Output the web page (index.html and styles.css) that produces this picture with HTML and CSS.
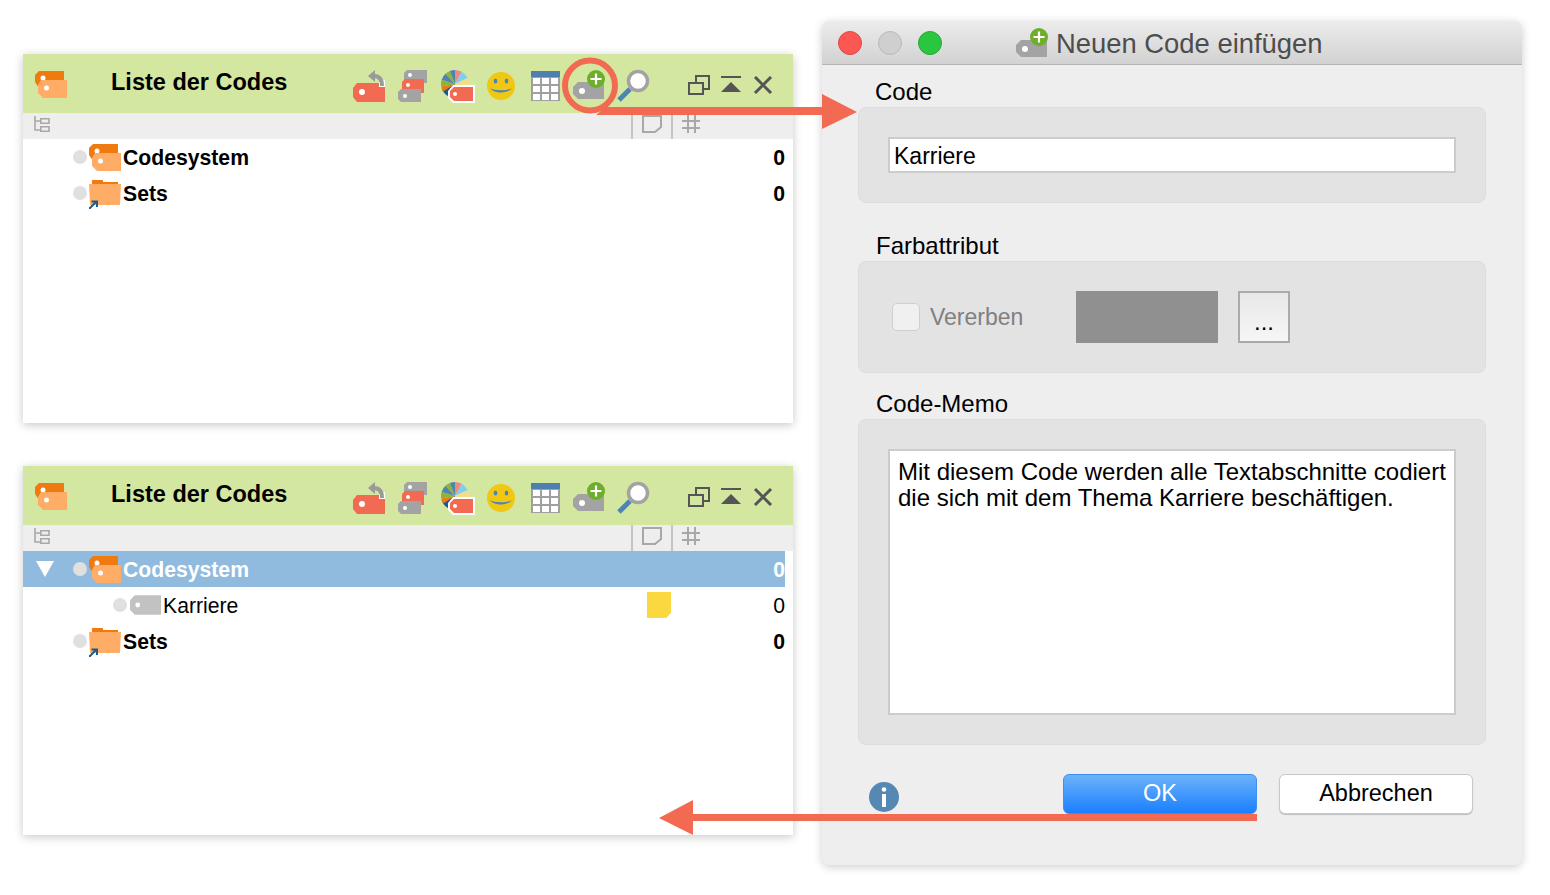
FILE: index.html
```html
<!DOCTYPE html>
<html lang="de">
<head>
    <meta charset="UTF-8">
    <meta name="viewport" content="width=device-width, initial-scale=1.0">
    <title>Neuen Code einfügen</title>
    <link rel="stylesheet" href="styles.css">
</head>
<body>
    <!-- icon sprite -->
    <svg class="sprite" aria-hidden="true">
        <symbol id="i-codes" viewBox="0 0 32 27">
            <path d="M4 0H29V17H4L0 11V4Z" fill="#ee7a10"/>
            <circle cx="8" cy="7" r="2.5" fill="#fff"/>
            <path d="M6 9H32V27H8L3 22V14Z" fill="#ffad66"/>
            <circle cx="11.5" cy="17" r="2.5" fill="#fff"/>
        </symbol>
        <symbol id="i-folder" viewBox="0 0 32 29">
            <path d="M3 0H14V2H29V8H3Z" fill="#ee7a10"/>
            <path d="M0 4H32L31 25H1Z" fill="#ffad66"/>
            <path d="M0 29L7 22M2.500 21.500H8V27" fill="none" stroke="#1f5a8a" stroke-width="2"/>
        </symbol>
        <symbol id="i-tag" viewBox="0 0 32 20">
            <path d="M5 0H32V20H5L0 15V5Z" fill="#c2c2c2"/>
            <circle cx="8" cy="10" r="2.500" fill="#fff"/>
        </symbol>
        <symbol id="i-undo" viewBox="0 0 36 38">
            <path d="M6 17H34V36H6L2 31V22Z" fill="#f26a52"/>
            <circle cx="11" cy="26" r="3" fill="#fff"/>
            <rect x="28" y="14" width="6" height="7" fill="#fff"/>
            <path d="M23 10C28 10 31 13 31 20" fill="none" stroke="#9a9a9a" stroke-width="4"/>
            <path d="M17 10L24 4V16Z" fill="#9a9a9a"/>
        </symbol>
        <symbol id="i-stack" viewBox="0 0 36 38">
            <path d="M12 4H32V17H12L9 14V7Z" fill="#a3a3a3"/>
            <circle cx="15" cy="9" r="2" fill="#fff"/>
            <path d="M10 13H29V27H10L7 24V16Z" fill="#f26a52"/>
            <circle cx="13" cy="19" r="2" fill="#fff"/>
            <path d="M6 23H26V36H6L3 33V26Z" fill="#a3a3a3"/>
            <circle cx="10" cy="30" r="2" fill="#fff"/>
        </symbol>
        <symbol id="i-pie" viewBox="0 0 36 38">
            <g transform="rotate(-90 16 18)" fill="none" stroke-width="14">
                <circle cx="16" cy="18" r="7" pathLength="100" stroke="#f08a7a" stroke-dasharray="8 100"/>
                <circle cx="16" cy="18" r="7" pathLength="100" stroke="#7fcdf0" stroke-dasharray="10 100" stroke-dashoffset="-8"/>
                <circle cx="16" cy="18" r="7" pathLength="100" stroke="#f3dc8a" stroke-dasharray="10 100" stroke-dashoffset="-18"/>
                <circle cx="16" cy="18" r="7" pathLength="100" stroke="#1f5a8a" stroke-dasharray="12 100" stroke-dashoffset="-58"/>
                <circle cx="16" cy="18" r="7" pathLength="100" stroke="#ee7a10" stroke-dasharray="6 100" stroke-dashoffset="-66"/>
                <circle cx="16" cy="18" r="7" pathLength="100" stroke="#8db33a" stroke-dasharray="8 100" stroke-dashoffset="-72"/>
                <circle cx="16" cy="18" r="7" pathLength="100" stroke="#4c84b8" stroke-dasharray="8 100" stroke-dashoffset="-80"/>
                <circle cx="16" cy="18" r="7" pathLength="100" stroke="#8db33a" stroke-dasharray="6 100" stroke-dashoffset="-88"/>
                <circle cx="16" cy="18" r="7" pathLength="100" stroke="#4c84b8" stroke-dasharray="6 100" stroke-dashoffset="-94"/>
            </g>
            <path d="M14 19H36V37H14L9 32V25Z" fill="#fff"/>
            <path d="M15 21H34V35H15L11 31V25Z" fill="#f26a52"/>
            <circle cx="16" cy="28" r="2" fill="#fff"/>
        </symbol>
        <symbol id="i-smile" viewBox="0 0 36 38">
            <circle cx="18" cy="20" r="14" fill="#f0c814"/>
            <ellipse cx="12.500" cy="15" rx="1.800" ry="2.600" fill="#4c84b8"/>
            <ellipse cx="23.500" cy="15" rx="1.800" ry="2.600" fill="#4c84b8"/>
            <path d="M7 22C11 28 25 28 29 22C25 25 11 25 7 22Z" fill="#4c84b8"/>
        </symbol>
        <symbol id="i-table" viewBox="0 0 36 38">
            <rect x="4" y="5" width="29" height="30" fill="#a0a0a0"/>
            <rect x="4" y="5" width="29" height="6" fill="#4f7fae"/>
            <path d="M6 12h7v6H6zM15 12h7v6h-7zM24 12h7v6h-7zM6 20h7v6H6zM15 20h7v6h-7zM24 20h7v6h-7zM6 28h7v6H6zM15 28h7v6h-7zM24 28h7v6h-7z" fill="#fff"/>
        </symbol>
        <symbol id="i-add" viewBox="0 0 36 38">
            <path d="M7 16H33V33H7L2 28V21Z" fill="#a3a3a3"/>
            <circle cx="11" cy="25" r="3" fill="#fff"/>
            <circle cx="25" cy="13" r="9" fill="#6fae2a"/>
            <path d="M25 7.500V18.500M19.500 13H30.500" stroke="#fff" stroke-width="2.200"/>
        </symbol>
        <symbol id="i-search" viewBox="0 0 36 38">
            <path d="M4 34L15 23" stroke="#4c84b8" stroke-width="5"/>
            <circle cx="23" cy="15" r="9.500" fill="#fff" stroke="#a3a3a3" stroke-width="3.500"/>
        </symbol>
        <symbol id="i-restore" viewBox="0 0 22 20">
            <path d="M8 7V1H21V14H15" fill="none" stroke="#555" stroke-width="2"/>
            <path d="M1 8H15V19H1Z" fill="none" stroke="#555" stroke-width="2"/>
        </symbol>
        <symbol id="i-collapse" viewBox="0 0 22 18">
            <rect x="1" y="0" width="20" height="2" fill="#555"/>
            <path d="M11 6L21 16H1Z" fill="#555"/>
        </symbol>
        <symbol id="i-close" viewBox="0 0 20 18">
            <path d="M2 1L18 17M18 1L2 17" stroke="#555" stroke-width="3"/>
        </symbol>
        <symbol id="i-tree" viewBox="0 0 16 16">
            <path d="M1 0V14H6M1 5H6" fill="none" stroke="#a8a8a8" stroke-width="1.600"/>
            <path d="M6.800 2.800H15V7.200H6.800ZM6.800 10.800H15V15.200H6.800Z" fill="none" stroke="#a8a8a8" stroke-width="1.600"/>
        </symbol>
        <symbol id="i-note" viewBox="0 0 20 18">
            <path d="M1 1H19V12L13 17H1Z" fill="none" stroke="#a8a8a8" stroke-width="2"/>
        </symbol>
        <symbol id="i-hash" viewBox="0 0 18 18">
            <path d="M6 0V18M13 0V18M0 6H18M0 13H18" stroke="#a8a8a8" stroke-width="2"/>
        </symbol>
        <symbol id="i-info" viewBox="0 0 30 30">
            <circle cx="15" cy="15" r="15" fill="#5688b4"/>
            <circle cx="15" cy="7.500" r="2.300" fill="#fff"/>
            <rect x="13" y="12" width="4" height="13" fill="#fff"/>
        </symbol>
    </svg>

    <div class="stage">
        <!-- list before -->
        <section class="panel panel-top">
            <header class="panel-head">
                <svg class="logo"><use href="#i-codes"/></svg>
                <h2 class="panel-title">Liste der Codes</h2>
                <div class="tools">
                    <svg class="tool"><use href="#i-undo"/></svg>
                    <svg class="tool"><use href="#i-stack"/></svg>
                    <svg class="tool"><use href="#i-pie"/></svg>
                    <svg class="tool"><use href="#i-smile"/></svg>
                    <svg class="tool"><use href="#i-table"/></svg>
                    <svg class="tool"><use href="#i-add"/></svg>
                    <svg class="tool"><use href="#i-search"/></svg>
                </div>
                <div class="win-tools">
                    <span class="win-tool"><svg class="ic-restore"><use href="#i-restore"/></svg></span>
                    <span class="win-tool"><svg class="ic-collapse"><use href="#i-collapse"/></svg></span>
                    <span class="win-tool"><svg class="ic-close"><use href="#i-close"/></svg></span>
                </div>
            </header>
            <div class="col-head">
                <svg class="ic-tree"><use href="#i-tree"/></svg>
                <span class="col-cell"><svg class="ic-note"><use href="#i-note"/></svg></span>
                <span class="col-cell"><svg class="ic-hash"><use href="#i-hash"/></svg></span>
            </div>
            <div class="rows">
                <div class="row strong">
                    <span class="caret-slot"></span>
                    <span class="dot"></span>
                    <svg class="row-icon"><use href="#i-codes"/></svg>
                    <span class="row-label">Codesystem</span>
                    <span class="row-count">0</span>
                </div>
                <div class="row strong">
                    <span class="caret-slot"></span>
                    <span class="dot"></span>
                    <svg class="row-icon folder"><use href="#i-folder"/></svg>
                    <span class="row-label">Sets</span>
                    <span class="row-count">0</span>
                </div>
            </div>
        </section>

        <!-- list after -->
        <section class="panel panel-bottom">
            <header class="panel-head">
                <svg class="logo"><use href="#i-codes"/></svg>
                <h2 class="panel-title">Liste der Codes</h2>
                <div class="tools">
                    <svg class="tool"><use href="#i-undo"/></svg>
                    <svg class="tool"><use href="#i-stack"/></svg>
                    <svg class="tool"><use href="#i-pie"/></svg>
                    <svg class="tool"><use href="#i-smile"/></svg>
                    <svg class="tool"><use href="#i-table"/></svg>
                    <svg class="tool"><use href="#i-add"/></svg>
                    <svg class="tool"><use href="#i-search"/></svg>
                </div>
                <div class="win-tools">
                    <span class="win-tool"><svg class="ic-restore"><use href="#i-restore"/></svg></span>
                    <span class="win-tool"><svg class="ic-collapse"><use href="#i-collapse"/></svg></span>
                    <span class="win-tool"><svg class="ic-close"><use href="#i-close"/></svg></span>
                </div>
            </header>
            <div class="col-head">
                <svg class="ic-tree"><use href="#i-tree"/></svg>
                <span class="col-cell"><svg class="ic-note"><use href="#i-note"/></svg></span>
                <span class="col-cell"><svg class="ic-hash"><use href="#i-hash"/></svg></span>
            </div>
            <div class="rows">
                <div class="row strong selected">
                    <span class="caret-slot"><span class="caret"></span></span>
                    <span class="dot"></span>
                    <svg class="row-icon"><use href="#i-codes"/></svg>
                    <span class="row-label">Codesystem</span>
                    <span class="row-count">0</span>
                </div>
                <div class="row child">
                    <span class="caret-slot"></span>
                    <span class="dot"></span>
                    <svg class="row-icon tag"><use href="#i-tag"/></svg>
                    <span class="row-label">Karriere</span>
                    <span class="memo"></span>
                    <span class="row-count">0</span>
                </div>
                <div class="row strong">
                    <span class="caret-slot"></span>
                    <span class="dot"></span>
                    <svg class="row-icon folder"><use href="#i-folder"/></svg>
                    <span class="row-label">Sets</span>
                    <span class="row-count">0</span>
                </div>
            </div>
        </section>

        <!-- dialog -->
        <section class="dialog">
            <header class="dialog-bar">
                <span class="light light-red"></span>
                <span class="light light-grey"></span>
                <span class="light light-green"></span>
                <div class="dialog-title">
                    <svg class="title-icon"><use href="#i-add"/></svg>
                    <span class="title-text">Neuen Code einfügen</span>
                </div>
            </header>
            <div class="dialog-body">
                <label class="group-label">Code</label>
                <div class="group">
                    <div class="field">Karriere</div>
                </div>

                <label class="group-label second">Farbattribut</label>
                <div class="group group-color">
                    <span class="checkbox"></span>
                    <span class="check-label">Vererben</span>
                    <span class="swatch"></span>
                    <button class="more-btn" type="button">...</button>
                </div>

                <label class="group-label third">Code-Memo</label>
                <div class="group">
                    <div class="memo-field">Mit diesem Code werden alle Textabschnitte codiert<br>die sich mit dem Thema Karriere beschäftigen.</div>
                </div>

                <div class="dialog-foot">
                    <svg class="ic-info"><use href="#i-info"/></svg>
                    <button class="btn btn-ok" type="button">OK</button>
                    <button class="btn btn-cancel" type="button">Abbrechen</button>
                </div>
            </div>
        </section>

        <!-- annotation arrows -->
        <svg class="marks" viewBox="0 0 1550 895">
            <circle cx="590" cy="85.500" r="25" fill="none" stroke="#f26a52" stroke-width="6"/>
            <path d="M596 115L606 107H826V115Z" fill="#f26a52"/>
            <path d="M822 94L857 112L822 129Z" fill="#f26a52"/>
            <path d="M1257 817.500H690" stroke="#f26a52" stroke-width="7"/>
            <path d="M693 800L659 818L693 835Z" fill="#f26a52"/>
        </svg>
    </div>
</body>
</html>
```

FILE: styles.css
```css
* {
    margin: 0;
    padding: 0;
    box-sizing: border-box;
}

body {
    font-family: "Liberation Sans", Arial, sans-serif;
    background: #fff;
    color: #000;
    overflow: hidden;
}

.sprite {
    display: none;
}

.stage {
    position: relative;
    width: 1550px;
    height: 895px;
}

/* code list windows */
.panel {
    position: absolute;
    left: 23px;
    width: 770px;
    height: 369px;
    background: #fff;
    box-shadow: 0 2px 9px rgba(0, 0, 0, 0.22);
}

.panel-top {
    top: 54px;
}

.panel-bottom {
    top: 466px;
}

.panel-head {
    height: 59px;
    background: #d4e7a1;
    display: flex;
    align-items: center;
    padding-left: 12px;
}

.logo {
    width: 32px;
    height: 27px;
    margin-top: 2px;
}

.panel-title {
    font-size: 23.500px;
    font-weight: bold;
    margin-left: 44px;
    margin-right: auto;
    margin-bottom: 2px;
}

.tools {
    display: flex;
}

.tool {
    width: 36px;
    height: 38px;
    margin-right: 8px;
    margin-top: 3px;
}

.win-tools {
    display: flex;
    margin-left: 24px;
    margin-right: 14px;
}

.win-tool {
    width: 32px;
    height: 32px;
    display: flex;
    align-items: center;
    justify-content: center;
    margin-top: 3px;
}

.ic-restore {
    width: 22px;
    height: 20px;
}

.ic-collapse {
    width: 22px;
    height: 18px;
}

.ic-close {
    width: 20px;
    height: 18px;
}

.col-head {
    height: 26px;
    background: #eee;
    display: flex;
    align-items: center;
    padding-left: 11px;
}

.ic-tree {
    width: 16px;
    height: 16px;
    margin-right: 581px;
    margin-bottom: 4px;
}

.col-cell {
    width: 40px;
    height: 26px;
    border-left: 2px solid #c4c4c4;
    display: flex;
    align-items: center;
    padding-left: 9px;
}

.ic-note {
    width: 20px;
    height: 18px;
    margin-bottom: 4px;
}

.ic-hash {
    width: 18px;
    height: 18px;
    margin-bottom: 4px;
}

.rows {
    padding-right: 8px;
}

.row {
    height: 36px;
    display: flex;
    align-items: center;
    font-size: 21.200px;
}

.row.strong {
    font-weight: bold;
}

.row.selected {
    background: #90bbde;
    color: #fff;
}

.caret-slot {
    width: 50px;
    flex: none;
    padding-left: 13px;
    display: flex;
}

.row.child .caret-slot {
    width: 90px;
}

.caret {
    width: 0;
    height: 0;
    border-left: 9px solid transparent;
    border-right: 9px solid transparent;
    border-top: 16px solid #fff;
}

.dot {
    width: 14px;
    height: 14px;
    border-radius: 50%;
    background: #e0e0e0;
    margin-right: 2px;
    flex: none;
}

.row-icon {
    width: 32px;
    height: 27px;
    flex: none;
    margin-right: 2px;
}

.row-icon.folder {
    height: 29px;
    margin-top: 3px;
}

.row-icon.tag {
    width: 31px;
    height: 20px;
    margin-left: 1px;
    margin-right: 2px;
}

.row-label {
    flex: 1;
    padding-top: 2px;
}

.row-count {
    width: 60px;
    text-align: right;
    padding-top: 2px;
}

.memo {
    width: 24px;
    height: 26px;
    background: #fbd83f;
    clip-path: polygon(0 0, 100% 0, 100% 80%, 80% 100%, 0 100%);
    margin-right: 55px;
}

.row.child .row-count {
    width: 60px;
    margin-left: -1px;
}

/* dialog */
.dialog {
    position: absolute;
    left: 822px;
    top: 21px;
    width: 700px;
    height: 844px;
    background: #eee;
    border-radius: 8px;
    box-shadow: 0 2px 10px rgba(0, 0, 0, 0.2);
    overflow: hidden;
}

.dialog-bar {
    height: 44px;
    background: linear-gradient(#ececec, #d2d2d2);
    border-bottom: 1px solid #b4b4b4;
    display: flex;
    align-items: center;
    padding-left: 16px;
    gap: 16px;
}

.light {
    width: 24px;
    height: 24px;
    border-radius: 50%;
    flex: none;
}

.light-red {
    background: #fc5753;
    border: 1px solid #df4744;
}

.light-grey {
    background: #cfcfcf;
    border: 1px solid #b9b9b9;
}

.light-green {
    background: #2ac63f;
    border: 1px solid #24a934;
}

.dialog-title {
    display: flex;
    align-items: center;
    margin-left: 58px;
    font-size: 27.400px;
    color: #4d4d4d;
}

.title-icon {
    width: 36px;
    height: 38px;
    margin-right: 6px;
    margin-left: -2px;
}

.title-text {
    margin-top: 3px;
}

.dialog-body {
    padding: 15px 36px 0;
}

.group-label {
    display: block;
    height: 27px;
    line-height: 24px;
    padding-left: 17px;
    font-size: 24px;
}

.group-label.second {
    margin-top: 31px;
    padding-left: 18px;
}

.group-label.third {
    margin-top: 19px;
    padding-left: 18px;
}

.group {
    background: #e3e3e3;
    border: 1px solid #dcdcdc;
    border-radius: 8px;
    padding: 29px;
}

.field {
    height: 36px;
    background: #fff;
    border: 2px solid #ccc;
    padding-left: 4px;
    font-size: 23px;
    line-height: 34px;
}

.group-color {
    display: flex;
    align-items: center;
    height: 112px;
}

.checkbox {
    width: 28px;
    height: 28px;
    margin-left: 4px;
    background: #f0f0f0;
    border: 1px solid #cfcfcf;
    border-radius: 5px;
    flex: none;
}

.check-label {
    font-size: 23px;
    color: #808080;
    margin-left: 10px;
    width: 146px;
}

.swatch {
    width: 142px;
    height: 52px;
    background: #909090;
    flex: none;
}

.more-btn {
    width: 52px;
    height: 52px;
    margin-left: 20px;
    background: linear-gradient(#e8e8e8, #f6f6f6);
    border: 2px solid #aaa;
    color: #000;
    font-family: inherit;
    font-size: 24px;
    line-height: 30px;
    padding-top: 10px;
}

.memo-field {
    height: 266px;
    background: #fff;
    border: 2px solid #ccc;
    padding: 8px;
    font-size: 24px;
    line-height: 26px;
}

.dialog-foot {
    display: flex;
    align-items: flex-start;
    margin-top: 29px;
    padding-left: 11px;
}

.ic-info {
    width: 30px;
    height: 30px;
    margin-top: 8px;
    margin-right: 164px;
}

.btn {
    width: 194px;
    height: 40px;
    border-radius: 6px;
    font-family: inherit;
    font-size: 23.500px;
    padding-bottom: 2px;
}

.btn-ok {
    background: linear-gradient(#6cb3fa, #1a7fff);
    border: 1px solid #3e90f0;
    color: #fff;
}

.btn-cancel {
    margin-left: 22px;
    background: #fff;
    border: 1px solid #c8c8c8;
    box-shadow: 0 1px 1px rgba(0, 0, 0, 0.2);
    color: #000;
}

/* red arrows lie over the windows */
.marks {
    position: absolute;
    left: 0;
    top: 0;
    width: 1550px;
    height: 895px;
    pointer-events: none;
}
```
